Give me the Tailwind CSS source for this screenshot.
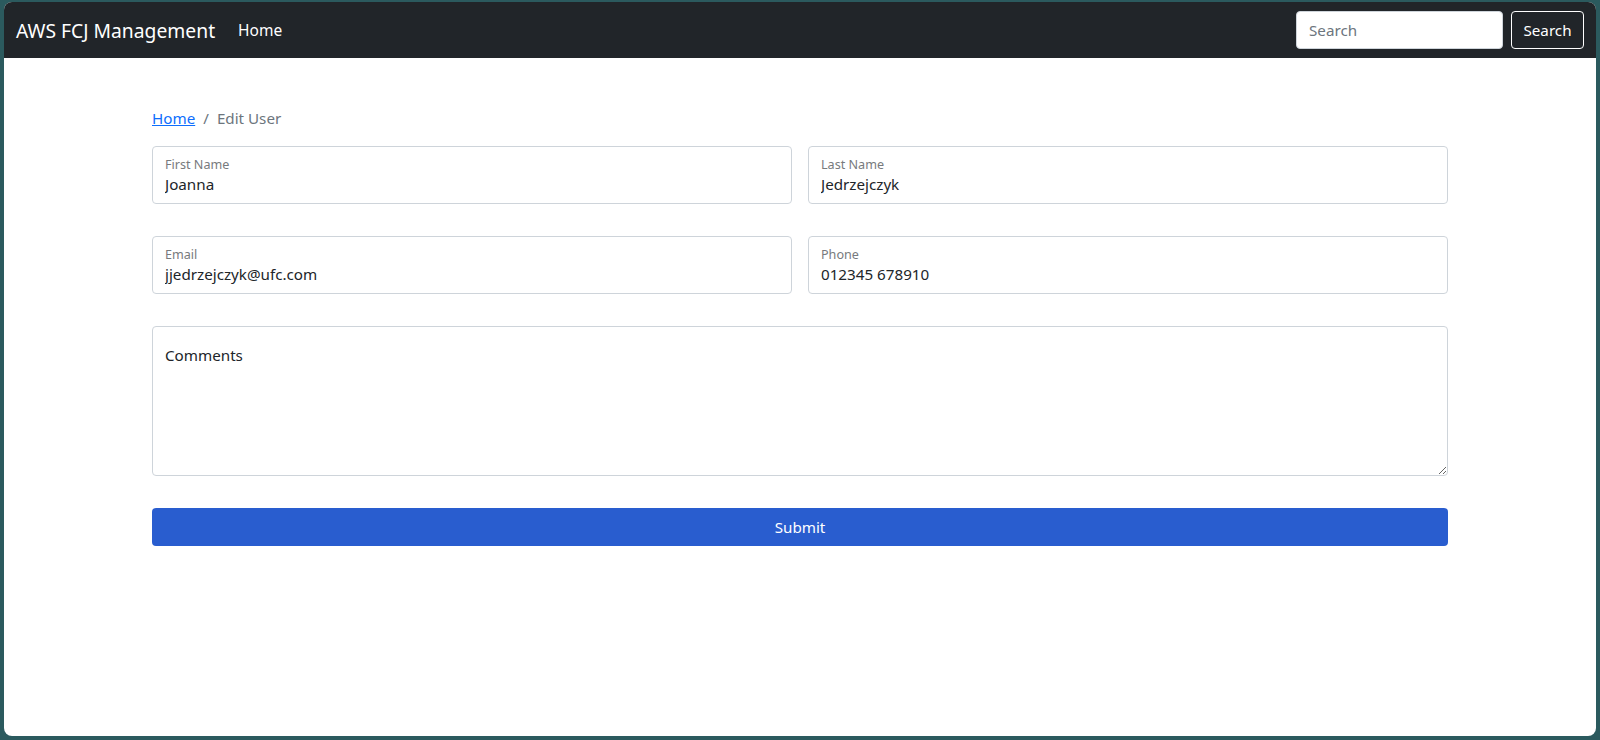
<!DOCTYPE html>
<html lang="en">
<head>
  <meta charset="UTF-8" />
  <title>Edit User</title>
  <script src="https://cdn.jsdelivr.net/npm/@tailwindcss/browser@4"></script>
</head>
<body class="h-[740px] overflow-hidden bg-[#2b5a5e] pt-[2px] px-1 pb-1 font-['Noto_Sans',sans-serif] text-[15.2px] text-[#212529]">
  <div class="h-full bg-white rounded-lg overflow-hidden">

    <!-- Navbar -->
    <nav class="h-[56px] bg-[#212529] flex items-center pl-3 pr-3 text-white">
      <a href="#" class="text-[19.3px] mr-[23px] pt-[2px]">AWS FCJ Management</a>
      <a href="#" class="text-[15.5px] pt-[2px]">Home</a>
      <form class="ml-auto flex gap-2">
        <input type="text" placeholder="Search" class="w-[207px] h-[38px] bg-white rounded border border-[#ced4da] px-3 text-[#212529] placeholder:text-[#6c757d] outline-none" />
        <button type="button" class="h-[38px] w-[73px] rounded border border-white text-white">Search</button>
      </form>
    </nav>

    <!-- Content -->
    <main class="mx-[148px] pt-[48px]">
      <div class="flex items-center h-[24px] mb-[16px]">
        <a href="#" class="text-[#0d6efd] underline">Home</a>
        <span class="text-[#6c757d] px-2">/</span>
        <span class="text-[#6c757d]">Edit User</span>
      </div>

      <form class="flex flex-col gap-8">
        <div class="grid grid-cols-2 gap-4">
          <div class="h-[58px] rounded border border-[#ced4da] px-3 pt-[10px]">
            <label class="block text-[12.6px] leading-[16px] text-[#777a7d]">First Name</label>
            <input type="text" value="Joanna" class="block w-full h-[22px] outline-none" />
          </div>
          <div class="h-[58px] rounded border border-[#ced4da] px-3 pt-[10px]">
            <label class="block text-[12.6px] leading-[16px] text-[#777a7d]">Last Name</label>
            <input type="text" value="Jedrzejczyk" class="block w-full h-[22px] outline-none" />
          </div>
        </div>

        <div class="grid grid-cols-2 gap-4">
          <div class="h-[58px] rounded border border-[#ced4da] px-3 pt-[10px]">
            <label class="block text-[12.6px] leading-[16px] text-[#777a7d]">Email</label>
            <input type="text" value="jjedrzejczyk@ufc.com" class="block w-full h-[22px] outline-none" />
          </div>
          <div class="h-[58px] rounded border border-[#ced4da] px-3 pt-[10px]">
            <label class="block text-[12.6px] leading-[16px] text-[#777a7d]">Phone</label>
            <input type="text" value="012345 678910" class="block w-full h-[22px] outline-none" />
          </div>
        </div>

        <textarea class="block w-full h-[150px] rounded border border-[#ced4da] px-3 pt-[17px] outline-none">Comments</textarea>

        <button type="button" class="h-[38px] w-full rounded bg-[#295dcf] text-white pt-[1px]">Submit</button>
      </form>
    </main>
  </div>
</body>
</html>
